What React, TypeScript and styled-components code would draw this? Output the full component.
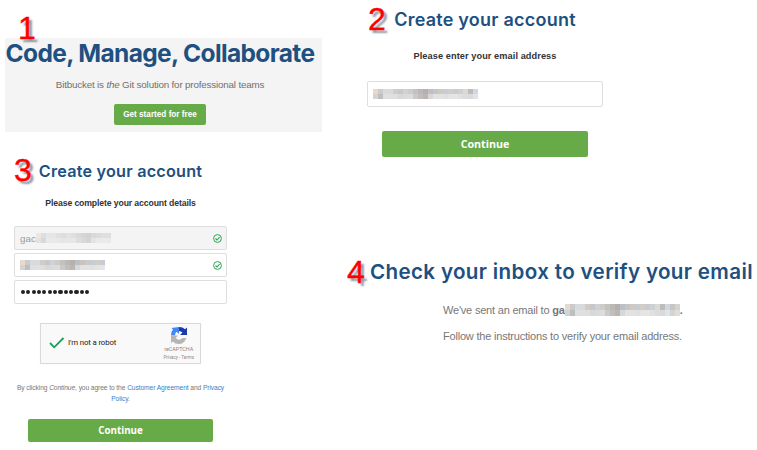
import React from 'react';
import styled, { createGlobalStyle } from 'styled-components';

const Global = createGlobalStyle`
  * { box-sizing: border-box; }
  body { margin: 0; background: #fff; font-family: "Liberation Sans", Arial, sans-serif; }
`;

const Page = styled.main`
  display: grid;
  grid-template-columns: 340px 417px;
  width: 757px;
  height: 450px;
  overflow: hidden;
`;

const Column = styled.div`
  display: flex;
  flex-direction: column;
`;

const StepNumber = styled.span<{ $x: number; $y: number }>`
  position: absolute;
  left: ${p => p.$x}px;
  top: ${p => p.$y}px;
  font-size: 32px;
  line-height: 30px;
  color: #f00;
  -webkit-text-stroke: 0.4px #f00;
  text-shadow: 3px 3px 2px rgba(50, 70, 90, 0.55);
`;

const Heading = styled.h1<{ $size: number; $spacing: number; $bold?: boolean }>`
  margin: 0;
  font-family: Inter, sans-serif;
  font-weight: ${p => (p.$bold ? 700 : 600)};
  font-size: ${p => p.$size}px;
  line-height: 30px;
  letter-spacing: ${p => p.$spacing}px;
  color: #205081;
  white-space: nowrap;
`;

const Hero = styled.section`
  position: relative;
  display: flex;
  flex-direction: column;
  align-items: center;
  width: 317px;
  height: 94px;
  margin: 38px 0 0 5px;
  padding-right: 7px;
  background: #f4f4f4;
`;

const HeroText = styled.p`
  margin: 11px 0 0;
  font-size: 9.8px;
  line-height: 12px;
  letter-spacing: -0.17px;
  color: #707070;
  white-space: nowrap;
`;

const Button = styled.button<{ $width: number; $height: number; $font: number; $small?: boolean }>`
  width: ${p => p.$width}px;
  height: ${p => p.$height}px;
  padding: 0;
  border: 0;
  border-radius: 2px;
  background: #67ab49;
  color: #fff;
  font-family: ${p => (p.$small ? '"Liberation Sans", Arial, sans-serif' : '"Open Sans", sans-serif')};
  font-weight: 700;
  font-size: ${p => p.$font}px;
  line-height: 14px;
`;

const Form = styled.section<{ $left: number; $top: number; $width: number }>`
  position: relative;
  display: flex;
  flex-direction: column;
  align-items: center;
  width: ${p => p.$width}px;
  margin: ${p => p.$top}px 0 0 ${p => p.$left}px;
`;

const Prompt = styled.p<{ $size: number; $spacing: number }>`
  margin: 0;
  font-size: ${p => p.$size}px;
  letter-spacing: ${p => p.$spacing}px;
  font-weight: 700;
  line-height: 12px;
  color: #333;
  white-space: nowrap;
`;

const Field = styled.div<{ $height: number; $muted?: boolean }>`
  display: flex;
  align-items: center;
  width: 100%;
  height: ${p => p.$height}px;
  padding: 0 4px 0 5px;
  border: 1px solid #dedede;
  border-radius: 2px;
  background: ${p => (p.$muted ? '#f4f4f4' : '#fff')};
  font-size: 9.8px;
  color: #999;
  svg { margin-left: auto; }
`;

const Fields = styled.div`
  display: flex;
  flex-direction: column;
  gap: 3px;
  width: 100%;
`;

const Dots = styled.div`
  display: flex;
  gap: 1.25px;
  margin-left: 1px;
  i { width: 4.1px; height: 4.1px; border-radius: 50%; background: #222; }
`;

const Mosaic = styled.span<{ $cell: number; $faint?: boolean }>`
  display: grid;
  grid-auto-flow: column;
  grid-template-rows: repeat(2, ${p => p.$cell}px);
  grid-auto-columns: 5px;
  opacity: ${p => (p.$faint ? 0.5 : 1)};
`;

const Pixel = styled.i<{ $c: string }>`
  background: ${p => p.$c};
`;

const Captcha = styled.div`
  display: flex;
  align-items: center;
  width: 161px;
  height: 41px;
  padding: 0 6px 0 8px;
  border: 1px solid #d9d9d9;
  border-radius: 1px;
  background: #f9f9f9;
  box-shadow: 0 0 1px #ddd;
`;

const CaptchaLabel = styled.span`
  margin: -2px 0 0 3px;
  font-family: Roboto, sans-serif;
  font-size: 7.8px;
  letter-spacing: -0.12px;
  color: #222;
  white-space: nowrap;
`;

const CaptchaBrand = styled.div`
  display: flex;
  flex-direction: column;
  align-items: center;
  margin-left: auto;
  font-family: Roboto, sans-serif;
  color: #888;
  white-space: nowrap;
`;

const BrandName = styled.span`
  margin-top: 2px;
  font-size: 5.4px;
  line-height: 7px;
`;

const BrandLinks = styled.span`
  margin-top: 1px;
  font-size: 4.5px;
  line-height: 7px;
`;

const Legal = styled.p`
  margin: 0;
  font-size: 6.7px;
  letter-spacing: -0.1px;
  line-height: 11px;
  color: #777;
  text-align: center;
  white-space: nowrap;
  a { color: #3b7fc4; }
`;

const Verify = styled.section`
  position: relative;
  margin: 100px 0 0 30px;
`;

const Message = styled.p<{ $top: number }>`
  display: flex;
  align-items: center;
  margin: ${p => p.$top}px 0 0 73px;
  font-size: 11px;
  line-height: 14px;
  letter-spacing: -0.2px;
  color: #777;
  white-space: pre;
`;

const Gap = styled.div<{ $h: number }>`
  height: ${p => p.$h}px;
  flex: none;
`;

const emailTones = ['#e8d9cf','#d5d3d2','#cbcbcb','#bebebe','#d5dcdf','#dfdfdf','#dcdad6','#e0e0e0','#cfcdca','#dededf','#c8c8c8','#d8d8d8','#cdd1d8','#dadada','#cfcbc8','#dcdcdc','#c4c2c0','#cccac8','#bcb8b6','#c3bebb','#b5b0ae','#b9b6b4','#bcc0c4','#d8d6d6','#c6c5bf','#e2e2e2','#cfc9c4','#e2e2e2','#c7ccd2','#e0e0e0','#d2cdc6','#e4e4e4','#c8ccd0','#e5e5e5','#cfcfcf','#e0e0e0','#d9d9d9','#dcdcdc','#bebbb9','#d8dadd','#cfd8e0','#dfe4e8','#c9c5c2','#d6d4d2','#d3d3d3','#dededc'];

const ObscuredEmail = ({ columns, cell = 5, faint }: { columns: number; cell?: number; faint?: boolean }) => (
  <Mosaic $cell={cell} $faint={faint}>
    {emailTones.slice(0, columns * 2).map((c, i) => <Pixel key={i} $c={c} />)}
  </Mosaic>
);

const ValidIcon = () => (
  <svg width="9" height="9" viewBox="0 0 9 9" fill="none" stroke="#2ca555">
    <circle cx="4.5" cy="4.5" r="3.9" strokeWidth="1" />
    <path d="M2.5 4.5 4 6 6.6 3.2" strokeWidth="1.1" />
  </svg>
);

export default function App() {
  return (
    <>
      <Global />
      <Page>
        <Column>
          <Hero>
            <StepNumber $x={13} $y={-25}>1</StepNumber>
            <Heading $size={24.5} $spacing={-0.63} $bold>Code, Manage, Collaborate</Heading>
            <HeroText>Bitbucket is <em>the</em> Git solution for professional teams</HeroText>
            <Gap $h={13} />
            <Button $width={92} $height={21} $font={8.2} $small>Get started for free</Button>
          </Hero>
          <Form $left={14} $top={24} $width={213}>
            <StepNumber $x={0} $y={-1}>3</StepNumber>
            <Heading $size={16.2} $spacing={0.22}>Create your account</Heading>
            <Gap $h={11} />
            <Prompt $size={8.7} $spacing={-0.13}>Please complete your account details</Prompt>
            <Gap $h={17} />
            <Fields>
              <Field $height={24} $muted>gac<ObscuredEmail columns={15} faint /><ValidIcon /></Field>
              <Field $height={24}><ObscuredEmail columns={17} /><ValidIcon /></Field>
              <Field $height={24}><Dots>{Array.from({ length: 13 }, (_, i) => <i key={i} />)}</Dots></Field>
            </Fields>
            <Gap $h={19} />
            <Captcha>
              <svg width="16" height="14" viewBox="0 0 16 14" fill="none" stroke="#16a15a" strokeWidth="1.8"><path d="m1 6 4.2 4.3L14.5 1" /></svg>
              <CaptchaLabel>I'm not a robot</CaptchaLabel>
              <CaptchaBrand>
                <svg width="18" height="17" viewBox="0 0 18 17"><path fill="#1c3aa9" d="M9 0q4 0 6 2.2L17 .5V8h-7l2.5-2.5Q11 4 9 4z" /><path fill="#4285f4" d="M9 0v7L6.5 4.8Q5 6 5 8.5H1q0-4 2-6L1.5 1z" /><path fill="#b5b5b5" d="M1 8.5h7L5.7 11Q9 14.5 12.5 11h4Q14 17 9 17q-4 0-6-2.5L1 16z" /></svg>
                <BrandName>reCAPTCHA</BrandName>
                <BrandLinks>Privacy - Terms</BrandLinks>
              </CaptchaBrand>
            </Captcha>
            <Gap $h={18} />
            <Legal>By clicking <em>Continue</em>, you agree to the <a>Customer Agreement</a> and <a>Privacy<br />Policy</a>.</Legal>
            <Gap $h={15} />
            <Button $width={185} $height={23} $font={9.8}>Continue</Button>
          </Form>
        </Column>
        <Column>
          <Form $left={27} $top={5} $width={236}>
            <StepNumber $x={1} $y={-1}>2</StepNumber>
            <Heading $size={18} $spacing={0.24}>Create your account</Heading>
            <Gap $h={15} />
            <Prompt $size={9.2} $spacing={0.08}>Please enter your email address</Prompt>
            <Gap $h={19} />
            <Field $height={26}><ObscuredEmail columns={21} /></Field>
            <Gap $h={24} />
            <Button $width={206} $height={26} $font={10.7}>Continue</Button>
          </Form>
          <Verify>
            <StepNumber $x={-23} $y={0}>4</StepNumber>
            <Heading $size={20.6} $spacing={0.34}>Check your inbox to verify your email</Heading>
            <Message $top={16}>We've sent an email to <b>ga</b><ObscuredEmail columns={23} cell={6} /><b>.</b></Message>
            <Message $top={12}>Follow the instructions to verify your email address.</Message>
          </Verify>
        </Column>
      </Page>
    </>
  );
}
